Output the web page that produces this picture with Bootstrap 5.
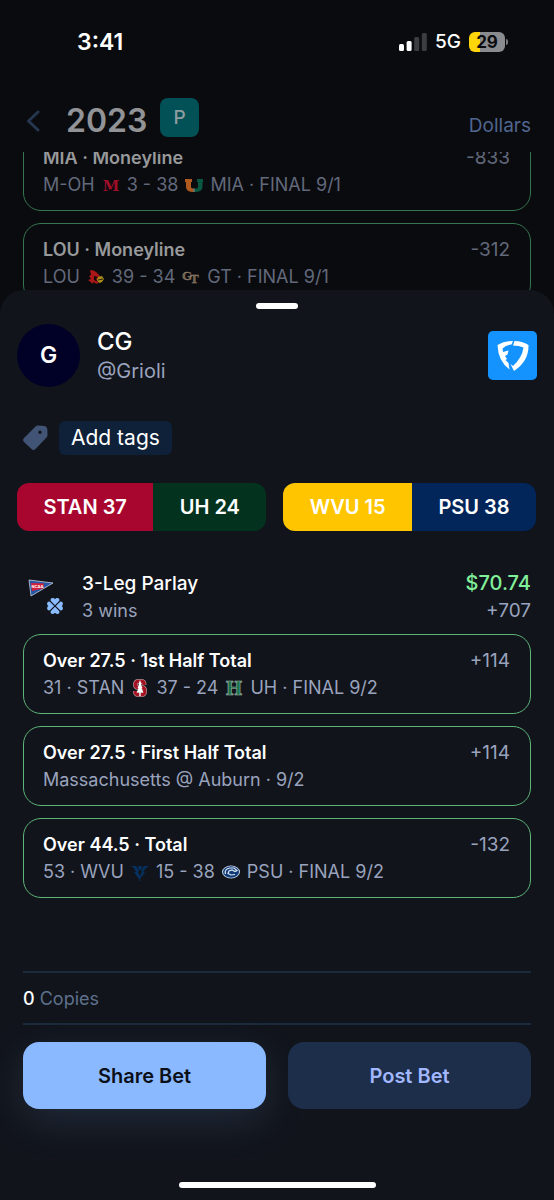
<!DOCTYPE html>
<html lang="en">
<head>
<meta charset="utf-8">
<meta name="viewport" content="width=device-width, initial-scale=1">
<title>3-Leg Parlay</title>
<link href="https://cdn.jsdelivr.net/npm/bootstrap@5.3.0/dist/css/bootstrap.min.css" rel="stylesheet">
<style>
  body { background: #0a0b0f; color: #fff; font-family: Inter, "Liberation Sans", sans-serif; font-size: 19px; line-height: 27px; }
  svg { flex: none; }
  .status { padding: 26px 46px 0 77px; height: 84px; font-size: 23px; line-height: 32px; }
  .status .net { font-size: 19px; }
  .battery { width: 36px; height: 20px; border-radius: 6px; font-size: 17px; line-height: 20px; color: #0a0b0f; background: linear-gradient(90deg, #ffd60a 11px, #8a8b8e 11px); }
  .battery-cap { width: 2px; height: 6px; margin-left: 1px; border-radius: 0 3px 3px 0; background: #77787b; }
  .topbar { height: 68px; padding: 14px 23px 0 26px; }
  .topbar h1 { font-size: 32px; line-height: 46px; width: 94px; margin: 0 0 0 26px; color: #929396; }
  .pro { width: 39px; height: 39px; border-radius: 8px; background: #025156; color: #8c9da0; font-size: 19px; }
  .unit-link { color: #506690; padding-top: 14px; }
  .behind { overflow: hidden; padding: 0 23px; }
  .behind .bet-list { margin-top: -21px; }
  .bet-list { gap: 12px; }
  .leg { border: 1px solid #5bb478; border-radius: 18px; padding: 12px 20px 12px 19px; }
  .leg-title, .leg-info { font-size: 18px; }
  .behind .leg { border-color: #35754f; }
  .leg-title { color: #fff; }
  .behind .leg-title { color: #98999b; }
  .soft { color: #9aa3bd; }
  .behind .soft { color: #62697b; }
  .logo { width: 18px; height: 18px; margin: 0 7px; }
  .behind .logo { opacity: .75; }
  .sheet { position: relative; margin-top: -13px; background: #11141b; border-radius: 24px 24px 0 0; }
  .grabber { width: 42px; height: 6px; border-radius: 3px; background: #fff; margin-top: 13px; }
  .who { padding: 15px 17px 0; gap: 17px; }
  .avatar { width: 63px; height: 63px; background: #010027; font-size: 23px; }
  .name { font-size: 24px; line-height: 30px; }
  .handle { font-size: 20px; line-height: 28px; }
  .tags { padding: 34px 23px 0; gap: 11px; }
  .tag-btn { background: #0f2039; color: #fff; font-size: 21px; line-height: 34px; padding: 0 12px; border-radius: 6px; }
  .scores { padding: 28px 18px 0 17px; gap: 17px; font-size: 20px; }
  .score { border-radius: 12px; overflow: hidden; line-height: 48px; }
  .score span { text-align: center; flex: 1 1 auto; }
  .stan { background: #a8062f; } .uh { background: #03331f; } .wvu { background: #ffc600; } .psu { background: #02255a; }
  .parlay { padding: 39px 23px 0; }
  .kinds { width: 59px; padding: 9px 0 0 5px; }
  .clover { margin: 1px 0 0 19px; }
  .win { color: #82f09a; font-size: 20px; }
  .legs { padding: 10px 23px 0; }
  .copies { margin: 73px 23px 0; border-top: 2px solid #1c2b3b; border-bottom: 2px solid #1c2b3b; padding: 12px 0 11px; font-size: 18px; }
  .copies .label { color: #5e718c; }
  .actions { padding: 17px 23px 0; gap: 22px; }
  .actions .btn { height: 67px; border-radius: 16px; font-size: 20px; border: 0; }
  .share { background: #8ab9ff; color: #0b1018; box-shadow: 0 12px 40px rgba(138, 185, 255, .14); }
  .share:hover { background: #7eafff; }
  .post { background: #1c2e4a; color: #a1b7ff; }
  .post:hover { background: #24395a; color: #a1b7ff; }
  .home-bar { width: 197px; height: 6px; border-radius: 3px; background: #fff; margin: 40px 0 12px; }
</style>
</head>
<body>
<div class="d-flex flex-column min-vh-100">
  <div class="status d-flex justify-content-between">
    <span class="fw-semibold">3:41</span>
    <div class="d-flex align-items-center align-self-start">
      <svg width="28" height="18" viewBox="0 0 28 18"><g fill="#fff"><rect y="11" width="5" height="7" rx="1.5"/><rect x="7.600" y="8" width="5" height="10" rx="1.500"/></g><g fill="#3c3d40"><rect x="15.200" y="4" width="5" height="14" rx="1.500"/><rect x="22.800" width="5" height="18" rx="1.500"/></g></svg>
      <span class="net fw-medium ms-2 me-2">5G</span>
      <span class="battery fw-bold text-center">29</span><span class="battery-cap"></span>
    </div>
  </div>

  <header class="topbar d-flex align-items-start">
    <a href="#" aria-label="Back" class="mt-2"><svg class="d-block mt-1" width="14" height="22" viewBox="0 0 14 22" fill="none" stroke="#26364f" stroke-width="3" stroke-linecap="round" stroke-linejoin="round"><path d="M12 2 2.500 11 12 20"/></svg></a>
    <h1 class="fw-semibold">2023</h1>
    <span class="pro d-flex align-items-center justify-content-center fw-medium">P</span>
    <a href="#" class="unit-link text-decoration-none ms-auto">Dollars</a>
  </header>

  <div class="behind">
    <div class="bet-list d-flex flex-column">
      <article class="leg">
        <div class="d-flex justify-content-between"><span class="leg-title fw-semibold">MIA · Moneyline</span><span class="soft">-833</span></div>
        <div class="leg-info soft d-flex align-items-center"><span>M-OH</span>
          <svg class="logo" viewBox="0 0 18 18"><text x="9" y="15" text-anchor="middle" font-family="DejaVu Serif, serif" font-weight="700" font-size="15" fill="#d0102f">M</text></svg>
          <span>3 - 38</span>
          <svg class="logo" viewBox="0 0 18 18"><path fill="#e57524" d="M0 3h7v3H6v5q0 1.500 2.500 1.500V16Q1 16 1 11V6H0z"/><path fill="#087252" d="M18 3h-6v3h1v5q0 1.500-3.500 1.500V16q8 0 8-5V6h.500z"/><path d="M9 12.500V16" stroke="#ddd"/></svg>
          <span>MIA · FINAL 9/1</span></div>
      </article>
      <article class="leg">
        <div class="d-flex justify-content-between"><span class="leg-title fw-semibold">LOU · Moneyline</span><span class="soft">-312</span></div>
        <div class="leg-info soft d-flex align-items-center"><span>LOU</span>
          <svg class="logo" viewBox="0 0 18 18"><path fill="#e01b1b" d="M3 2q5 0 8 4l3 3-1 3-3 4-4-2 0 2-5-4 3-1-2-3 2-1z"/><path d="m7 8 4 1-2 2 2 3-4-2z" fill="#16090b"/><path fill="#e0b91c" d="m11 9 4-1 2 3-2 3-3 1-2-3z"/><path stroke="#3a2a0a" d="m11 12 5-1"/></svg>
          <span>39 - 34</span>
          <svg class="logo" viewBox="0 0 18 18"><g font-family="Liberation Serif, serif" font-weight="700" fill="#987d5c" stroke="#c5b7a0" stroke-width=".3"><text x="0" y="12" font-size="13">G</text><text x="8" y="15" font-size="13">T</text></g></svg>
          <span>GT · FINAL 9/1</span></div>
      </article>
    </div>
  </div>

  <main class="sheet flex-grow-1 d-flex flex-column">
    <div class="grabber align-self-center"></div>

    <section class="who d-flex align-items-center">
      <span class="avatar rounded-circle d-flex align-items-center justify-content-center fw-semibold">G</span>
      <div>
        <div class="name fw-medium">CG</div>
        <div class="handle soft">@Grioli</div>
      </div>
      <svg class="ms-auto" width="49" height="49" viewBox="0 0 49 49" role="img" aria-label="Sportsbook"><rect width="49" height="49" rx="5" fill="#1493ff"/><path fill="#fff" d="M9.500 14Q16 10 25 10L23.500 13.500Q18 14 14.500 17.500L15 21 20.500 19.500 19.500 23.500 17 25 19 28 17.500 29 20.500 32 21.500 38.500Q10 30 9.500 14zM26.500 10Q34 10 40.500 14 41 30 26 40L22.500 33 25 35Q34 27 35.500 16.500 31 14.500 25 14.500z"/></svg>
    </section>

    <section class="tags d-flex align-items-center">
      <svg width="25" height="26" viewBox="0 0 25 26"><path fill="#415475" fill-rule="evenodd" d="M12.500 1.500Q13.500.500 15 .500L21 1q3 .300 3.300 3.300L24.500 10q0 1.500-1 2.500L12.500 24q-2 2-4 0L1 17q-1.800-2 0-4zM17 5.500a1.700 1.700 0 1 0 0 3.400 1.700 1.700 0 0 0 0-3.400z"/></svg>
      <button type="button" class="btn border-0 tag-btn">Add tags</button>
    </section>

    <section class="scores d-flex fw-semibold">
      <div class="score d-flex flex-fill"><span class="stan">STAN 37</span><span class="uh">UH 24</span></div>
      <div class="score d-flex flex-fill"><span class="wvu">WVU 15</span><span class="psu">PSU 38</span></div>
    </section>

    <section class="parlay d-flex">
      <div class="kinds">
        <svg class="d-block" width="26" height="18" viewBox="0 0 26 18"><path fill="#2458a7" stroke="#c9cedb" stroke-width=".8" d="M1 1 25 4 3 17z"/><path fill="#d5203a" d="m3 4 13 .500-1 5-11 2.500z"/><text x="3.500" y="9" font-size="4" font-weight="700" fill="#fff">NCAA</text></svg>
        <svg class="clover d-block" width="16" height="16" viewBox="0 0 14 14"><g fill="#8bbcff"><path id="leaf" d="M7 6.300 3.200 2.500Q2.800.200 4.900.100 6.300 0 7 1.100 7.700 0 9.100.100 11.200.200 10.800 2.500z"/><use href="#leaf" transform="rotate(90 7 7)"/><use href="#leaf" transform="rotate(180 7 7)"/><use href="#leaf" transform="rotate(270 7 7)"/></g></svg>
      </div>
      <div class="flex-grow-1">
        <div class="d-flex justify-content-between fw-medium"><span>3-Leg Parlay</span><span class="win">$70.74</span></div>
        <div class="d-flex justify-content-between soft"><span class="leg-info">3 wins</span><span>+707</span></div>
      </div>
    </section>

    <section class="legs bet-list d-flex flex-column">
      <article class="leg">
        <div class="d-flex justify-content-between"><span class="leg-title fw-semibold">Over 27.5 · 1st Half Total</span><span class="soft">+114</span></div>
        <div class="leg-info soft d-flex align-items-center"><span>31 · STAN</span>
          <svg class="logo" viewBox="0 0 18 18"><path fill="none" stroke="#c9b3b6" stroke-width="4.600" stroke-linejoin="bevel" d="M13 6V4l-1-1.500H6L4.500 4v3L6 8.500h6L13.500 10v4L12 15.500H6L4.500 14v-2"/><path fill="none" stroke="#a51424" stroke-width="3.600" stroke-linejoin="bevel" d="M13 6V4l-1-1.500H6L4.500 4v3L6 8.500h6L13.500 10v4L12 15.500H6L4.500 14v-2"/><path fill="#fff" d="m9 1 1.500 4-.500 1 1.500 3-1 .500 2 4H9.700V17H8.300v-3.500H5.500l2-4-1-.500L8 6l-.500-1z"/></svg>
          <span>37 - 24</span>
          <svg class="logo" viewBox="0 0 18 18"><text x="9" y="15.500" text-anchor="middle" font-family="DejaVu Serif, serif" font-weight="700" font-size="18" fill="#1b7049" stroke="#a3b9af" stroke-width=".6">H</text></svg>
          <span>UH · FINAL 9/2</span></div>
      </article>
      <article class="leg">
        <div class="d-flex justify-content-between"><span class="leg-title fw-semibold">Over 27.5 · First Half Total</span><span class="soft">+114</span></div>
        <div class="leg-info soft">Massachusetts @ Auburn · 9/2</div>
      </article>
      <article class="leg">
        <div class="d-flex justify-content-between"><span class="leg-title fw-semibold">Over 44.5 · Total</span><span class="soft">-132</span></div>
        <div class="leg-info soft d-flex align-items-center"><span>53 · WVU</span>
          <svg class="logo" viewBox="0 0 18 18"><path fill="#05305f" d="M0 3h5l3 4-1-4h4l-1 4 3-4h5l-3 2-3 4h2l-2 3-3 4v2H8v-2l-3-4-2-3h2L3 5zM7 9l2 4 2-4-2-3z"/></svg>
          <span>15 - 38</span>
          <svg class="logo" viewBox="0 0 18 18"><ellipse cx="9" cy="9" rx="9" ry="6.500" fill="#c6d5e8"/><ellipse cx="9" cy="9" rx="8" ry="5.700" fill="#113c78"/><path fill="none" stroke="#dbe6f3" stroke-width="1.200" d="M3.500 11Q2 6 8 5L12 5l3 2.500-2 1-3-1.500-3 1-1 2.500 3 1.500 4-.500"/></svg>
          <span>PSU · FINAL 9/2</span></div>
      </article>
    </section>

    <div class="copies"><span class="fw-medium">0</span> <span class="label">Copies</span></div>

    <div class="actions d-flex">
      <button type="button" class="btn share fw-semibold flex-fill w-50">Share Bet</button>
      <button type="button" class="btn post fw-semibold flex-fill w-50">Post Bet</button>
    </div>
    <div class="flex-grow-1"></div>
    <div class="home-bar align-self-center"></div>
  </main>
</div>
<script src="https://cdn.jsdelivr.net/npm/bootstrap@5.3.0/dist/js/bootstrap.bundle.min.js"></script>
</body>
</html>
